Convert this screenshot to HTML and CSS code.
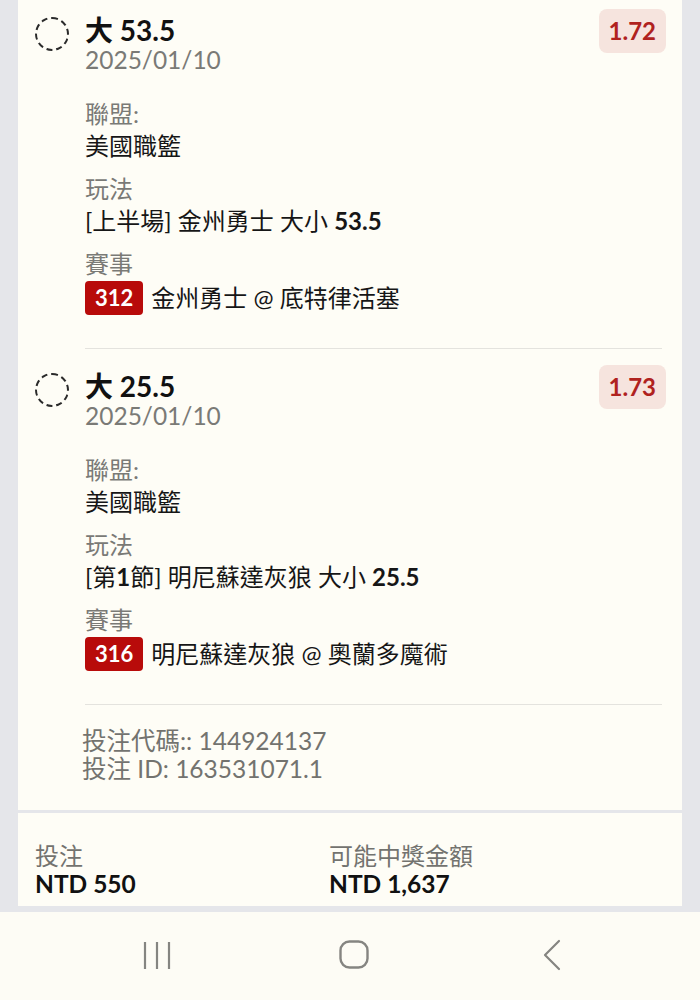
FILE: index.html
```html
<!DOCTYPE html>
<html lang="zh-Hant">
<head>
<meta charset="utf-8">
<title>投注</title>
<link rel="stylesheet" href="styles.css">
</head>
<body>
<div class="page">
  <div class="card">
    <div class="bet bet-first">
      <div class="check"></div>
      <div class="body">
        <div class="title">大 53.5</div>
        <div class="date">2025/01/10</div>
        <div class="field">
          <div class="label">聯盟:</div>
          <div class="value">美國職籃</div>
        </div>
        <div class="field">
          <div class="label">玩法</div>
          <div class="value">[上半場] 金州勇士 大小 <b>53.5</b></div>
        </div>
        <div class="field">
          <div class="label">賽事</div>
          <div class="value game"><span class="gno">312</span><span>金州勇士 @ 底特律活塞</span></div>
        </div>
      </div>
      <div class="odds">1.72</div>
    </div>
    <div class="sep"></div>
    <div class="bet">
      <div class="check"></div>
      <div class="body">
        <div class="title">大 25.5</div>
        <div class="date">2025/01/10</div>
        <div class="field">
          <div class="label">聯盟:</div>
          <div class="value">美國職籃</div>
        </div>
        <div class="field">
          <div class="label">玩法</div>
          <div class="value">[第<b>1</b>節] 明尼蘇達灰狼 大小 <b>25.5</b></div>
        </div>
        <div class="field">
          <div class="label">賽事</div>
          <div class="value game"><span class="gno">316</span><span>明尼蘇達灰狼 @ 奧蘭多魔術</span></div>
        </div>
      </div>
      <div class="odds">1.73</div>
    </div>
    <div class="sep"></div>
    <div class="codes">
      <div>投注代碼:: 144924137</div>
      <div>投注 ID: 163531071.1</div>
    </div>
  </div>
  <div class="card summary">
    <div class="sum-col">
      <div class="sum-label">投注</div>
      <div class="sum-value">NTD 550</div>
    </div>
    <div class="sum-col">
      <div class="sum-label">可能中獎金額</div>
      <div class="sum-value">NTD 1,637</div>
    </div>
  </div>
</div>
<nav class="navbar">
  <svg class="nav-icon" width="30" height="30" viewBox="0 0 30 30" aria-hidden="true">
    <path d="M3 2v27M15 2v27M27 2v27" stroke="#858581" stroke-width="2.2" fill="none"/>
  </svg>
  <svg class="nav-icon" width="32" height="32" viewBox="0 0 32 32" aria-hidden="true">
    <rect x="2.5" y="2.5" width="27" height="26" rx="9" stroke="#858581" stroke-width="2.4" fill="none"/>
  </svg>
  <svg class="nav-icon" width="20" height="32" viewBox="0 0 20 32" aria-hidden="true">
    <path d="M17 2 L3 16 L17 30" stroke="#858581" stroke-width="2.2" fill="none" stroke-linecap="round" stroke-linejoin="round"/>
  </svg>
</nav>
</body>
</html>
```

FILE: styles.css
```css
* { box-sizing: border-box; }
html, body { margin: 0; padding: 0; }
body {
  width: 700px;
  height: 1000px;
  overflow: hidden;
  background: #e5e6ea;
  font-family: "Lato", "Noto Sans CJK TC", sans-serif;
  color: #151515;
  display: flex;
  flex-direction: column;
}
.page {
  padding: 0 18px 4px;
  flex: 1;
  min-height: 0;
}
.card {
  background: #fefdf6;
}
.bet {
  display: flex;
  align-items: flex-start;
  gap: 16px;
  padding: 16px 16px 32px 17px;
}
.bet-first { padding-top: 9px; }
.check {
  flex: none;
  width: 34px;
  height: 34px;
  margin-top: 8px;
  border: 2px dashed #2a2a2a;
  border-radius: 50%;
}
.body { flex: 1; min-width: 0; }
.title {
  font-size: 28px;
  font-weight: 700;
  line-height: 34px;
  margin-top: 4px;
  color: #111;
}
.date {
  font-size: 24.5px;
  line-height: 26px;
  color: #7a7a76;
  margin-bottom: 25px;
}
.field + .field { margin-top: 11px; }
.label {
  font-size: 24px;
  line-height: 32px;
  color: #7a7a76;
}
.value {
  font-size: 24px;
  line-height: 32px;
  color: #161616;
}
.value b { font-weight: 700; }
.game {
  display: flex;
  align-items: center;
  gap: 8px;
  line-height: 36px;
}
.gno {
  background: #b80b0a;
  color: #fff;
  font-weight: 700;
  font-size: 22px;
  line-height: 34px;
  height: 34px;
  padding: 0 10px;
  border-radius: 4px;
}
.odds {
  flex: none;
  background: #f6e4de;
  color: #b0221e;
  font-weight: 700;
  font-size: 24px;
  line-height: 44px;
  height: 44px;
  padding: 0 10px;
  border-radius: 8px;
}
.sep {
  height: 1px;
  background: #e4e3de;
  margin: 0 20px 0 67px;
}
.codes {
  padding: 22px 0 27px 64px;
  font-size: 24.5px;
  line-height: 28px;
  color: #73736f;
}
.summary {
  margin-top: 3px;
  display: grid;
  grid-template-columns: 294px 1fr;
  padding: 29px 17px 8px;
}
.sum-label {
  font-size: 24px;
  line-height: 28px;
  color: #73736f;
}
.sum-value {
  font-size: 24.5px;
  line-height: 28px;
  font-weight: 700;
  color: #111;
}
.navbar {
  height: 88px;
  flex: none;
  background: #fdfcf5;
  display: flex;
  align-items: center;
  padding-bottom: 2px;
}
.navbar svg:nth-child(1) { margin-left: 142px; }
.navbar svg:nth-child(2) { margin-left: 166px; }
.navbar svg:nth-child(3) { margin-left: 172px; }
```
